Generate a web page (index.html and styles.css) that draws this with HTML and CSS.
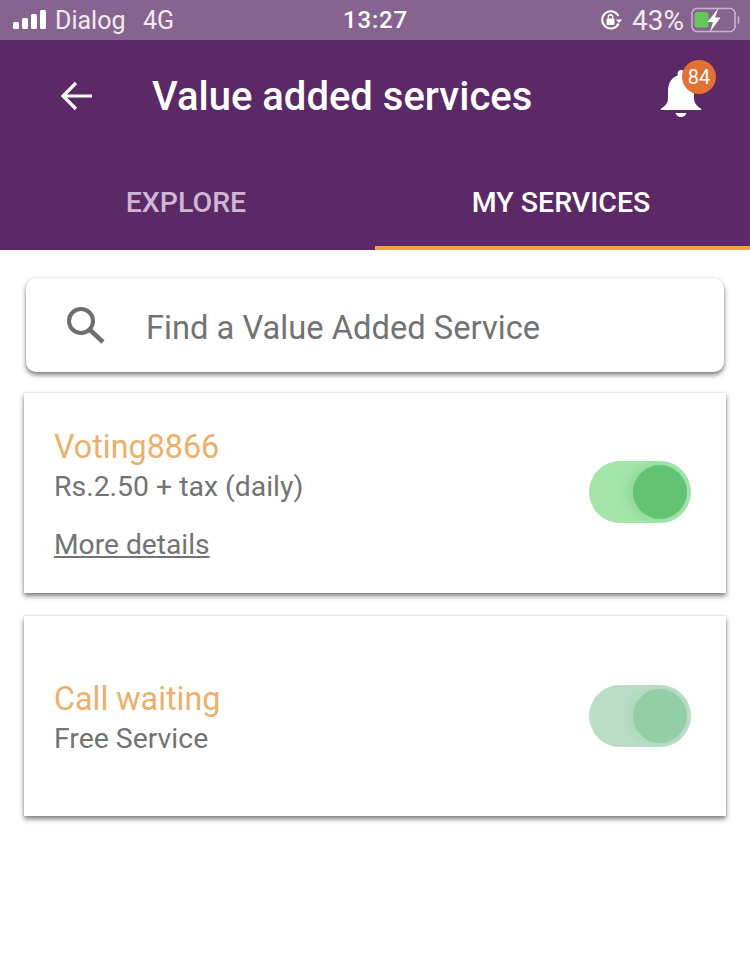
FILE: index.html
```html
<!DOCTYPE html>
<html lang="en">
<head>
    <meta charset="UTF-8">
    <meta name="viewport" content="width=device-width, initial-scale=1.0">
    <title>Value added services</title>
    <link rel="stylesheet" href="styles.css">
</head>
<body>
    <div class="status">
        <div class="status-left">
            <svg class="signal" width="34" height="20" viewBox="0 0 34 20">
                <rect x="0" y="12" width="6" height="7" rx="1.5"/>
                <rect x="9" y="8" width="6" height="11" rx="1.5"/>
                <rect x="18" y="4" width="6" height="15" rx="1.5"/>
                <rect x="27" y="0" width="6" height="19" rx="1.5"/>
            </svg>
            <span class="carrier">Dialog</span>
            <span class="net">4G</span>
        </div>
        <div class="clock">13:27</div>
        <div class="status-right">
            <svg class="lock" width="22" height="22" viewBox="0 0 22 22">
                <path d="M18.6 14.5A8.6 8.6 0 1 1 18.5 7" fill="none" stroke="#fff" stroke-width="2"/>
                <path d="M16 10.5h6l-3 3.4z" fill="#fff"/>
                <rect x="6.500" y="9.500" width="8" height="6.500" rx="1" fill="#fff"/>
                <path d="M8.300 9.500V8a2.200 2.200 0 0 1 4.400 0v1.500" fill="none" stroke="#fff" stroke-width="1.400"/>
            </svg>
            <span class="pct">43%</span>
            <svg class="battery" width="50" height="32" viewBox="0 0 50 32">
                <rect x="1" y="4.500" width="43" height="23" rx="5" fill="none" stroke="#c7b3cc" stroke-width="1.600"/>
                <rect x="3.500" y="8" width="14" height="15.500" rx="2.500" fill="#65c65a"/>
                <path d="M47.500 13v6" stroke="#c7b3cc" stroke-width="1.600" stroke-linecap="round"/>
                <path d="M27.500 4 16.500 18h5.500l-3 10 10.500-14.500h-5.500z" fill="#fff"/>
            </svg>
        </div>
    </div>

    <header class="topbar">
        <svg class="back" width="36" height="34" viewBox="0 0 36 34">
            <path d="M33 17H4M17 4 4 17l13 13" fill="none" stroke="#fff" stroke-width="3.200"/>
        </svg>
        <h1>Value added services</h1>
        <div class="bell">
            <svg width="46" height="52" viewBox="0 0 46 52">
                <path d="M23 3c1.900 0 3.300 1.300 3.300 3v2.500C33 10.500 36 17 36 24v8c0 3.500 2 5.500 4 7.500 1 1 3.500 2 3.500 3.500H2.500c0-1.500 2.500-2.500 3.500-3.500 2-2 4-4 4-7.500v-8c0-7 3-13.500 9.700-15.500V6c0-1.700 1.400-3 3.300-3z" fill="#fff"/>
                <path d="M17.500 46h11c-.8 2.600-3 4-5.500 4s-4.700-1.400-5.500-4z" fill="#fff"/>
            </svg>
            <span class="badge">84</span>
        </div>
    </header>

    <nav class="tabs">
        <a class="tab">EXPLORE</a>
        <a class="tab active">MY SERVICES</a>
    </nav>

    <main class="content">
        <div class="search">
            <svg width="42" height="42" viewBox="0 0 42 42">
                <circle cx="16" cy="16" r="12" fill="none" stroke="#6e6e6e" stroke-width="4"/>
                <path d="M25 25l13 12" stroke="#6e6e6e" stroke-width="4.500"/>
            </svg>
            <span class="placeholder">Find a Value Added Service</span>
        </div>

        <div class="card card-first">
            <div class="info">
                <div class="name">Voting8866</div>
                <div class="price">Rs.2.50 + tax (daily)</div>
                <a class="more">More details</a>
            </div>
            <div class="switch"><span class="knob"></span></div>
        </div>

        <div class="card card-second">
            <div class="info">
                <div class="name">Call waiting</div>
                <div class="price">Free Service</div>
            </div>
            <div class="switch faded"><span class="knob"></span></div>
        </div>
    </main>
</body>
</html>
```

FILE: styles.css
```css
* {
    box-sizing: border-box;
    margin: 0;
}
body {
    background-color: #fff;
    font-family: Roboto, "Liberation Sans", sans-serif;
    color: #737373;
}

/* status bar */
.status {
    height: 40px;
    padding: 0 12px 0 13px;
    display: grid;
    grid-template-columns: 1fr auto 1fr;
    align-items: center;
    background-color: #87648f;
    color: #fff;
    font-size: 25px;
}
.status-left {
    display: flex;
    align-items: center;
}
.signal {
    fill: #fff;
    margin-right: 8px;
}
.carrier {
    color: #f1eaf2;
    width: 88px;
}
.net {
    color: #f1eaf2;
}
.clock {
    font-size: 24px;
    font-weight: 500;
    letter-spacing: .8px;
}
.status-right {
    display: flex;
    align-items: center;
    justify-content: flex-end;
    gap: 10px;
}
.pct {
    color: #f1eaf2;
    font-size: 28px;
    margin-right: -3px;
}
.battery {
    margin-right: -3px;
}

/* header */
.topbar {
    height: 110px;
    padding: 0 45px 0 59px;
    display: flex;
    align-items: flex-start;
    background-color: #5b2966;
}
.back {
    margin-top: 39px;
}
.topbar h1 {
    margin-top: 32px;
    margin-left: 57px;
    flex-grow: 1;
    color: #fff;
    font-size: 40px;
    font-weight: 500;
    line-height: 50px;
}
.bell {
    position: relative;
    margin-top: 27px;
    margin-right: 1px;
    height: 52px;
}
.badge {
    position: absolute;
    top: -7px;
    left: 24px;
    width: 34px;
    height: 34px;
    border-radius: 50%;
    background-color: #e27133;
    color: #fff;
    font-size: 20px;
    line-height: 34px;
    text-align: center;
}

/* tabs */
.tabs {
    height: 100px;
    display: flex;
    background-color: #5b2966;
}
.tab {
    width: 50%;
    height: 100px;
    padding-top: 33px;
    padding-right: 3px;
    color: #cfb6d4;
    font-size: 28.500px;
    font-weight: 500;
    line-height: 40px;
    text-align: center;
}
.tab.active {
    color: #fff;
    border-bottom: 4px solid #eda24f;
}

/* list */
.content {
    padding: 28px 24px 146px;
}
.search {
    height: 94px;
    margin: 0 2px 21px;
    padding-left: 39px;
    display: flex;
    align-items: center;
    border-radius: 10px;
    background-color: #fff;
    box-shadow: 0 3px 5px rgba(0, 0, 0, .5), 0 0 2px rgba(0, 0, 0, .12);
}
.placeholder {
    margin-left: 39px;
    padding-top: 6px;
    font-size: 32.700px;
}
.search svg {
    margin-top: 2px;
}
.card {
    height: 200px;
    padding: 0 35px 0 30px;
    display: flex;
    align-items: center;
    justify-content: space-between;
    background-color: #fff;
    box-shadow: 0 3px 5px rgba(0, 0, 0, .5), 0 0 2px rgba(0, 0, 0, .12);
}
.card-first {
    margin-bottom: 23px;
}
.info {
    padding-top: 6px;
}
.name {
    color: #ebb06c;
    font-size: 32.300px;
    line-height: 40px;
}
.price {
    font-size: 28.400px;
    line-height: 40px;
}
.more {
    display: block;
    margin-top: 18px;
    font-size: 28.200px;
    line-height: 40px;
    text-decoration: underline;
}
.switch {
    position: relative;
    width: 102px;
    height: 62px;
    margin-top: -2px;
    border-radius: 31px;
    background-color: #a5e5ac;
}
.knob {
    position: absolute;
    top: 4px;
    right: 4px;
    width: 54px;
    height: 54px;
    border-radius: 50%;
    background-color: #62c472;
    box-shadow: -6px 0 12px rgba(98, 196, 114, .35);
}
.switch.faded {
    margin-top: 0;
    background-color: #bbddc6;
}
.switch.faded .knob {
    background-color: #93cfa4;
    box-shadow: -6px 0 12px rgba(147, 207, 164, .35);
}
```
